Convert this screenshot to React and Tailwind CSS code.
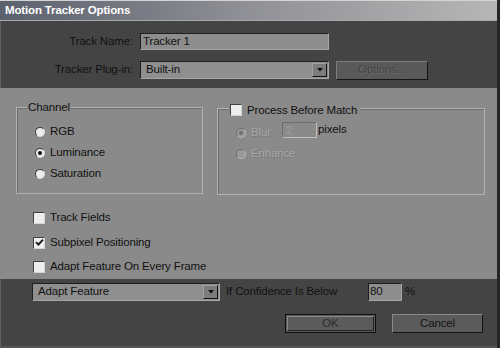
import React from "react";

const sunken =
  "border border-t-[#1e1e1e] border-l-[#1e1e1e] border-b-[#a6a6a6] border-r-[#a6a6a6]";

function Radio({ checked, disabled }) {
  return (
    <div
      className={
        "w-[10px] h-[10px] rounded-full border flex items-center justify-center shrink-0 " +
        (disabled
          ? "bg-[#9a9a9a] border-t-[#707070] border-l-[#707070] border-b-[#b8b8b8] border-r-[#b8b8b8]"
          : "bg-[#ececec] border-t-[#3a3a3a] border-l-[#3a3a3a] border-b-[#d6d6d6] border-r-[#d6d6d6]")
      }
    >
      {checked && (
        <div
          className={
            "w-[4px] h-[4px] rounded-full " +
            (disabled ? "bg-[#6e6e6e]" : "bg-[#111]")
          }
        />
      )}
    </div>
  );
}

function Check({ checked }) {
  return (
    <div className="w-[12px] h-[12px] shrink-0 bg-[#eeeeee] border border-t-[#404040] border-l-[#404040] border-b-[#d4d4d4] border-r-[#d4d4d4] flex items-center justify-center">
      {checked && (
        <svg width="9" height="9" viewBox="0 0 9 9">
          <path d="M1 4.2 L3.4 6.6 L8 1.6" fill="none" stroke="#111" strokeWidth="1.8" />
        </svg>
      )}
    </div>
  );
}

function Arrow() {
  return (
    <div className="w-[15px] h-full bg-[#7c7c7c] border border-t-[#a0a0a0] border-l-[#a0a0a0] border-b-[#111] border-r-[#111] flex items-center justify-center">
      <svg width="6" height="4" viewBox="0 0 6 4">
        <path d="M0 0 H6 L3 3.5 Z" fill="#111" />
      </svg>
    </div>
  );
}

export default function App() {
  return (
    <div className="w-[500px] h-[348px] flex flex-col bg-[#444444] font-['Liberation_Sans',Arial,sans-serif] text-[11.5px] tracking-[-0.15px] text-[#111] overflow-hidden border-r-[3px] border-r-[#252525] shadow-[inset_1px_0_0_#5e5e5e]">
      {/* Title bar */}
      <div className="h-[21px] shrink-0 border-t border-t-[#d4d4d4] border-b border-b-[#a8a8a8] bg-linear-to-r from-[#5c616e] via-[#909196] to-[#b6b6b6] flex items-center pl-[5px] text-white font-bold text-[11.5px]">
        Motion Tracker Options
      </div>

      {/* Top dark section */}
      <div className="h-[67px] shrink-0 pt-[12px] flex flex-col gap-[11px]">
        <div className="flex items-center h-[17px]">
          <div className="w-[133px] text-right">Track Name:</div>
          <div className={"ml-[7px] w-[189px] h-[17px] bg-[#8d8d8d] flex items-center pl-[2px] " + sunken}>
            Tracker 1
          </div>
        </div>
        <div className="flex items-center h-[18px]">
          <div className="w-[133px] text-right">Tracker Plug-in:</div>
          <div className={"ml-[7px] w-[189px] h-[18px] bg-[#8f8f8f] flex items-center justify-between pl-[5px] pr-[1px] py-[1px] " + sunken}>
            <span>Built-in</span>
            <Arrow />
          </div>
          <div className="ml-[7px] w-[92px] h-[19px] bg-[#595959] border border-t-[#7e7e7e] border-l-[#7e7e7e] border-b-[#151515] border-r-[#151515] flex items-center justify-center text-[#454545] [text-shadow:1px_1px_0_#6c6c6c]">
            Options...
          </div>
        </div>
      </div>

      {/* Middle light section */}
      <div className="h-[191px] shrink-0 bg-[#8a8a8a] flex flex-col">
        <div className="flex items-start h-[107px] pl-[16px] pt-[19px]">
          {/* Channel */}
          <div className="relative w-[187px] h-[87px] border border-[#b2b2b2] shadow-[inset_1px_1px_0_#6c6c6c] pt-[13px] pl-[18px] flex flex-col">
            <div className="absolute -top-[8px] left-[10px] px-[1px] bg-[#8a8a8a] leading-[14px]">Channel</div>
            <div className="flex items-center h-[21px] gap-[5px]">
              <Radio />
              <span>RGB</span>
            </div>
            <div className="flex items-center h-[21px] gap-[5px]">
              <Radio checked />
              <span>Luminance</span>
            </div>
            <div className="flex items-center h-[21px] gap-[5px]">
              <Radio />
              <span>Saturation</span>
            </div>
          </div>

          {/* Process Before Match */}
          <div className="relative ml-[14px] mt-[1px] w-[268px] h-[87px] border border-[#b2b2b2] shadow-[inset_1px_1px_0_#6c6c6c] pt-[13px] pl-[18px] flex flex-col">
            <div className="absolute -top-[6px] left-[11px] pl-[1px] pr-[3px] bg-[#8a8a8a] flex items-center gap-[5px] leading-[14px]">
              <Check />
              <span>Process Before Match</span>
            </div>
            <div className="flex items-center h-[21px]">
              <Radio checked disabled />
              <span className="ml-[5px] w-[31px] text-[#a6a6a6] [text-shadow:1px_1px_0_#7a7a7a]">Blur</span>
              <div className="flex items-center mb-[6px]">
                <div className="w-[35px] h-[16px] bg-[#8a8a8a] border border-t-[#6e6e6e] border-l-[#6e6e6e] border-b-[#c0c0c0] border-r-[#c0c0c0] text-[#9e9e9e] pl-[3px] leading-[14px]">
                  2
                </div>
                <span className="ml-[1px]">pixels</span>
              </div>
            </div>
            <div className="flex items-center h-[21px]">
              <Radio disabled />
              <span className="ml-[5px] text-[#a6a6a6] [text-shadow:1px_1px_0_#7a7a7a]">Enhance</span>
            </div>
          </div>
        </div>

        {/* Checkboxes */}
        <div className="flex flex-col pl-[33px] mt-[10px]">
          <div className="flex items-center h-[25px] gap-[5px]">
            <Check />
            <span>Track Fields</span>
          </div>
          <div className="flex items-center h-[25px] gap-[5px]">
            <Check checked />
            <span>Subpixel Positioning</span>
          </div>
          <div className="flex items-center h-[24px] gap-[5px]">
            <Check />
            <span>Adapt Feature On Every Frame</span>
          </div>
        </div>
      </div>

      {/* Bottom dark section */}
      <div className="flex-1 flex flex-col pt-[4px] shadow-[inset_0_-2px_0_#555]">
        <div className="flex items-center h-[18px]">
          <div className={"ml-[32px] w-[188px] h-[18px] bg-[#8f8f8f] flex items-center justify-between pl-[5px] pr-[1px] py-[1px] " + sunken}>
            <span>Adapt Feature</span>
            <Arrow />
          </div>
          <span className="ml-[6px] w-[142px]">If Confidence Is Below</span>
          <div className={"w-[34px] h-[18px] bg-[#8d8d8d] flex items-center pl-[1px] " + sunken}>80</div>
          <span className="ml-[3px]">%</span>
        </div>
        <div className="flex items-center mt-[13px] pl-[285px] gap-[16px]">
          <div className="w-[91px] h-[19px] border border-[#0e0e0e] bg-[#5b5b5b] p-[1px]">
            <div className="w-full h-full border border-t-[#888] border-l-[#888] border-b-[#222] border-r-[#222] flex items-center justify-center text-[#2c2c2c]">
              OK
            </div>
          </div>
          <div className="w-[91px] h-[19px] bg-[#5b5b5b] border border-t-[#8a8a8a] border-l-[#8a8a8a] border-b-[#111] border-r-[#111] flex items-center justify-center text-[#141414]">
            Cancel
          </div>
        </div>
      </div>
    </div>
  );
}
